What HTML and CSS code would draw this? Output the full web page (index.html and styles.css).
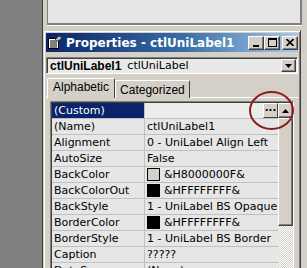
FILE: index.html
```html
<!DOCTYPE html>
<html lang="en">
<head>
  <meta charset="UTF-8">
  <title>Properties</title>
  <link rel="stylesheet" href="styles.css">
</head>
<body>
  <div class="desk">
    <div class="gutter"></div>
    <div class="main">
      <div class="toppanel"></div>
      <div class="propwin">
        <div class="titlebar">
          <svg class="ticon" width="14" height="13" viewBox="0 0 14 13">
            <rect x="0.5" y="2.5" width="10" height="10" fill="#fff" stroke="#000"/>
            <path d="M2 5h7M2 7h7M2 9h7M2 11h7" stroke="#000"/>
            <path d="M7 4 L11 0 L14 2 L10 5 Z" fill="#c0c0c0" stroke="#404040" stroke-width="0.8"/>
          </svg>
          <span class="ttext">Properties - ctlUniLabel1</span>
          <div class="tbtns">
            <div class="tbtn"><span class="g-min"></span></div>
            <div class="tbtn"><span class="g-max"></span></div>
            <div class="tbtn close"><svg width="8" height="7" viewBox="0 0 8 7"><path d="M0.5 0 L7.5 7 M7.5 0 L0.5 7" stroke="#000" stroke-width="1.6"/></svg></div>
          </div>
        </div>
        <div class="combo">
          <span class="cname">ctlUniLabel1</span>
          <span class="ctype">ctlUniLabel</span>
          <div class="ddbtn"><svg width="7" height="4" viewBox="0 0 7 4"><path d="M0 0h7L3.5 4z" fill="#000"/></svg></div>
        </div>
        <div class="tabs">
          <div class="tab active">Alphabetic</div>
          <div class="tab">Categorized</div>
        </div>
        <div class="tabpanel">
          <div class="gridwrap">
            <div class="grid">
              <div class="row sel"><div class="k">(Custom)</div><div class="v"><div class="dots">...</div></div></div>
              <div class="row"><div class="k">(Name)</div><div class="v">ctlUniLabel1</div></div>
              <div class="row"><div class="k">Alignment</div><div class="v">0 - UniLabel Align Left</div></div>
              <div class="row"><div class="k">AutoSize</div><div class="v">False</div></div>
              <div class="row"><div class="k">BackColor</div><div class="v"><span class="sw"></span>&amp;H8000000F&amp;</div></div>
              <div class="row"><div class="k">BackColorOut</div><div class="v"><span class="sw blk"></span>&amp;HFFFFFFFF&amp;</div></div>
              <div class="row"><div class="k">BackStyle</div><div class="v">1 - UniLabel BS Opaque</div></div>
              <div class="row"><div class="k">BorderColor</div><div class="v"><span class="sw blk"></span>&amp;HFFFFFFFF&amp;</div></div>
              <div class="row"><div class="k">BorderStyle</div><div class="v">1 - UniLabel BS Border</div></div>
              <div class="row"><div class="k">Caption</div><div class="v">?????</div></div>
              <div class="row"><div class="k">DataSource</div><div class="v">(None)</div></div>
            </div>
            <div class="vscroll">
              <div class="sbtn"><svg width="7" height="4" viewBox="0 0 7 4"><path d="M3.5 0L7 4H0z" fill="#000"/></svg></div>
              <div class="thumb"></div>
              <div class="track"></div>
            </div>
          </div>
        </div>
        <div class="ring"></div>
      </div>
    </div>
  </div>
</body>
</html>
```

FILE: styles.css
```css
body { margin: 0; background: #808080; font-family: 'DejaVu Sans', Verdana, sans-serif; font-size: 11px; overflow: hidden; }
.desk { display: flex; width: 307px; height: 268px; overflow: hidden; }
.gutter { width: 42px; flex: none; background: #808080; }
.main { flex: 1; background: #d4d0c8; border-left: 1px solid #404040; display: flex; flex-direction: column; min-width: 0; }
.toppanel { height: 23px; margin-left: 4px; margin-right: 5px; background: #e6e6e6; border-left: 1px solid #808080; border-right: 2px solid #808080; border-bottom: 2px solid #808080; box-shadow: 0 1px 0 #fff; flex: none; }
.propwin { position: relative; margin-top: 5px; margin-right: 6px; border: 1px solid #d4d0c8; border-right-color: #404040; border-bottom: none; box-shadow: inset 1px 1px 0 #fff, inset -1px 0 0 #808080; padding: 2px 2px 0 2px; flex: 1; }
.titlebar { height: 19px; background: linear-gradient(90deg, #0a246a 0%, #3a6ea5 55%, #a6caf0 100%); display: flex; align-items: center; padding-left: 2px; color: #fff; }
.ticon { flex: none; margin-right: 4px; }
.ttext { font-weight: bold; font-size: 12px; flex: 1; white-space: nowrap; }
.tbtns { display: flex; gap: 0; padding-right: 0; }
.tbtn { width: 14px; height: 12px; background: #d4d0c8; border: 1px solid; border-color: #fff #404040 #404040 #fff; box-shadow: inset -1px -1px 0 #808080; display: flex; align-items: center; justify-content: center; position: relative; }
.tbtn.close { margin-left: 2px; }
.g-min { width: 6px; height: 2px; background: #000; margin-top: 6px; margin-left: -1px; }
.g-max { width: 7px; height: 6px; border: 1px solid #000; border-top-width: 2px; }
.combo { margin-top: 5px; height: 15px; border: 1px solid; border-color: #808080 #fff #fff #808080; box-shadow: inset 1px 1px 0 #404040; background: #e9e9e9; display: flex; align-items: center; padding-left: 3px; font-size: 11px; color: #000; position: relative; }
.cname { font-family: 'Liberation Sans', Arial, sans-serif; font-weight: bold; font-size: 12px; margin-right: 6px; }
.ddbtn { margin-left: auto; margin-right: 1px; width: 13px; height: 11px; background: #d4d0c8; border: 1px solid; border-color: #fff #404040 #404040 #fff; box-shadow: inset -1px -1px 0 #808080; display: flex; align-items: center; justify-content: center; }
.tabs { display: flex; align-items: flex-end; height: 20px; margin-top: 4px; padding-left: 1px; }
.tab { font-family: 'Liberation Sans', Arial, sans-serif; font-size: 12px; padding: 2px 4px 1px 4px; height: 14px; border: 1px solid; border-color: #fff #404040 transparent #fff; border-bottom: none; border-radius: 2px 2px 0 0; background: #d4d0c8; color: #000; }
.tab.active { height: 18px; padding: 1px 5px 0 5px; position: relative; z-index: 1; }
.tabpanel { border-top: 1px solid #fff; padding: 3px 0 0 4px; margin-top: -1px; }
.gridwrap { display: flex; border: 1px solid; border-color: #808080 #fff #fff #808080; box-shadow: inset 1px 1px 0 #404040; padding: 1px 0 0 1px; margin-right: 4px; }
.grid { flex: 1; min-width: 0; }
.row { display: flex; height: 15px; border-bottom: 1px solid #c0c0c0; background: #e6e6e6; font-size: 11px; line-height: 15px; white-space: nowrap; }
.k { width: 90px; padding-left: 2px; border-right: 1px solid #c0c0c0; overflow: hidden; }
.v { flex: 1; padding-left: 2px; display: flex; align-items: center; overflow: hidden; }
.row.sel .k { background: #0a246a; color: #fff; }
.row.sel .v { background: #ececec; justify-content: flex-end; padding-right: 0; }
.dots { width: 13px; height: 13px; background: #d4d0c8; border: 1px solid; border-color: #fff #404040 #404040 #fff; font-weight: bold; font-size: 10px; line-height: 8px; text-align: center; }
.sw { width: 11px; height: 11px; border: 1px solid #000; background: #d4d0c8; margin-right: 4px; flex: none; }
.sw.blk { background: #000; }
.vscroll { width: 15px; display: flex; flex-direction: column; flex: none; }
.sbtn { height: 13px; background: #d4d0c8; border: 1px solid; border-color: #fff #404040 #404040 #fff; box-shadow: inset -1px -1px 0 #808080; display: flex; align-items: center; justify-content: center; }
.thumb { height: 106px; background: #d4d0c8; border: 1px solid; border-color: #fff #404040 #404040 #fff; box-shadow: inset -1px -1px 0 #808080; }
.track { flex: 1; height: 60px; background-color: #fff; background-image: repeating-conic-gradient(#d4d0c8 0 25%, #fff 0 50%); background-size: 2px 2px; }
.ring { position: absolute; left: 205px; top: 60px; width: 41px; height: 35px; border: 2px solid #8b1c1c; border-radius: 50%; pointer-events: none; }
```
